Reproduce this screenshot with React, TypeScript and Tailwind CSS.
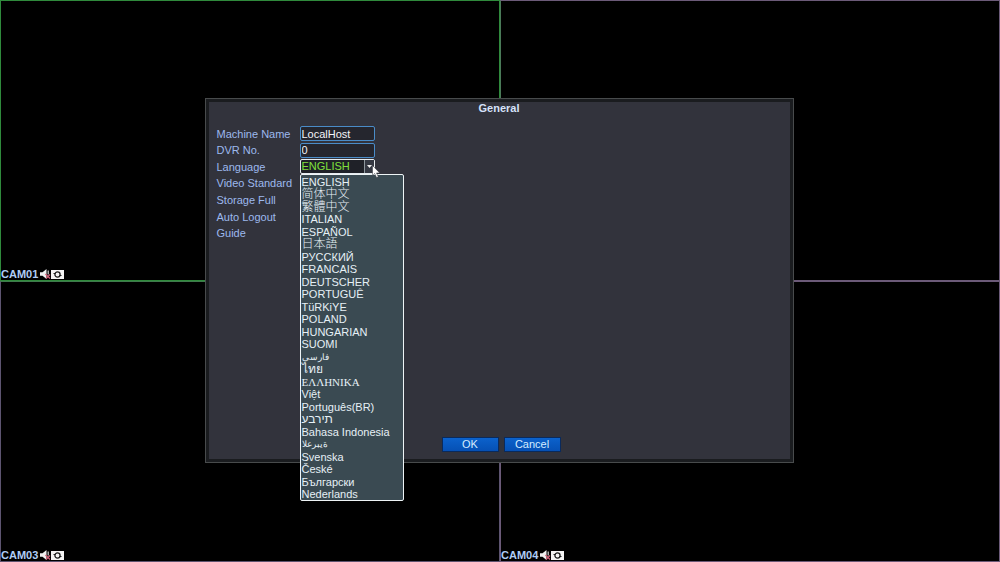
import { useState } from 'react';
import { clsx } from 'clsx';

const cameras = [
  { name: 'CAM01', border: 'border-[#2f8a3c]' },
  { name: 'CAM02', border: 'border-[#6b5a78] border-l-[#4a7a58]' },
  { name: 'CAM03', border: 'border-[#5d5470] border-t-[#3f7a4c]' },
  { name: 'CAM04', border: 'border-[#6b5a78]' },
];

const languages = [
  { label: 'ENGLISH' },
  { label: '简体中文', style: 'text-[12px] font-light' },
  { label: '繁體中文', style: 'text-[12px] font-light' },
  { label: 'ITALIAN' },
  { label: 'ESPAÑOL' },
  { label: '日本語', style: 'text-[12px] font-light' },
  { label: 'РУССКИЙ' },
  { label: 'FRANCAIS' },
  { label: 'DEUTSCHER' },
  { label: 'PORTUGUÊ' },
  { label: 'TüRKiYE' },
  { label: 'POLAND' },
  { label: 'HUNGARIAN' },
  { label: 'SUOMI' },
  { label: 'فارسی', style: 'text-[9px]' },
  { label: 'ไทย', style: 'text-[12px]' },
  { label: 'ΕΛΛΗΝΙΚΑ', style: "text-[11px] font-['Liberation_Serif',serif]" },
  { label: 'Việt' },
  { label: 'Português(BR)' },
  { label: 'עברית', style: 'text-[12px] [direction:ltr] [unicode-bidi:bidi-override]' },
  { label: 'Bahasa Indonesia' },
  { label: 'العربية', style: 'text-[9px] [direction:ltr] [unicode-bidi:bidi-override]' },
  { label: 'Svenska' },
  { label: 'České' },
  { label: 'Български' },
  { label: 'Nederlands' },
];

const otherSettings = ['Video Standard', 'Storage Full', 'Auto Logout', 'Guide'];

const fieldStyle =
  'h-[15px] w-[75px] rounded-[2px] border border-[#4a8cc8] bg-[#25262e] px-px text-[11px] leading-none text-[#f2f4f8] outline-none';

function MutedIcon() {
  return (
    <svg width="11" height="10" viewBox="0 0 11 10" aria-hidden="true">
      <path d="M0 3.2h2.5L6.5 0v10L2.5 6.8H0z" fill="#f0f0f0" />
      <path d="M8.2 1.5v4" stroke="#d8d8d8" strokeWidth="1.2" />
      <path d="M5.5 5l4.5 4.5M10 5.5L6 9.5" stroke="#d06078" strokeWidth="1.3" />
    </svg>
  );
}

function RecordIcon() {
  return (
    <svg width="13" height="9" viewBox="0 0 13 9" aria-hidden="true">
      <rect width="13" height="9" fill="#f4f4f4" />
      <circle cx="6.5" cy="4.5" r="2.6" fill="none" stroke="#1c1c1c" strokeWidth="1.3" />
      <path d="M2.5 3.5h2M8.5 5.5h2" stroke="#1c1c1c" strokeWidth="1" />
    </svg>
  );
}

function CameraGrid() {
  return (
    <div className="grid min-h-screen grid-cols-2 grid-rows-2">
      {cameras.map((camera) => (
        <section
          key={camera.name}
          aria-label={camera.name}
          className={clsx('flex items-end border', camera.border)}
        >
          <div className="flex h-3 items-center text-[11px] leading-3 font-bold text-[#b0cdf6]">
            <span>{camera.name}</span>
            <span className="ml-0.5 flex items-center">
              <MutedIcon />
              <RecordIcon />
            </span>
          </div>
        </section>
      ))}
    </div>
  );
}

function LanguageSelect() {
  const [language, setLanguage] = useState('ENGLISH');

  return (
    <div className="relative w-[75px]">
      <select
        id="language"
        value={language}
        onChange={(e) => setLanguage(e.target.value)}
        className="block h-[15px] w-full appearance-none rounded-[2px] border border-[#e6ecf0] bg-[#1f2128] px-px text-[11px] leading-none text-[#80e03c] outline-none"
      >
        {languages.map((item) => (
          <option key={item.label}>{item.label}</option>
        ))}
      </select>
      <span className="pointer-events-none absolute inset-y-px right-px flex w-[10px] items-center justify-center border-l border-[#8d969c] bg-[#343842]">
        <svg width="5" height="3" viewBox="0 0 5 3" aria-hidden="true">
          <path d="M0 0h5L2.5 3z" fill="#f0f0f0" />
        </svg>
      </span>

      {/* Open list */}
      <ul className="absolute top-full left-0 z-10 flex h-[327px] w-[104px] flex-col rounded-[2px] border border-[#eef4f6] bg-[#3a4a52]">
        {languages.map((item) => (
          <li key={item.label} className="flex min-h-0 flex-1 items-center">
            <button
              type="button"
              onClick={() => setLanguage(item.label)}
              className={clsx(
                'h-3 w-full px-px text-left leading-3 whitespace-nowrap text-[#e6f0f6]',
                item.style ?? 'text-[11px]'
              )}
            >
              {item.label}
            </button>
          </li>
        ))}
      </ul>

      {/* Mouse pointer */}
      <svg
        className="pointer-events-none absolute top-[6px] left-[72px] z-20"
        width="9"
        height="14"
        viewBox="0 0 9 14"
        aria-hidden="true"
      >
        <path d="M0.5 0.5v10l2.2-2 1.8 4 1.8-.8-1.8-3.8h3.2z" fill="#fff" stroke="#30343c" strokeWidth="0.5" />
      </svg>
    </div>
  );
}

function GeneralDialog() {
  return (
    <form
      aria-labelledby="dialog-title"
      onSubmit={(e) => e.preventDefault()}
      className="flex h-[365px] w-[589px] flex-col border border-[#484b4c] bg-[#1a1c1f] p-[3px]"
    >
      <div className="flex flex-1 flex-col bg-[#32333c] px-2">
        <h1 id="dialog-title" className="h-3 text-center text-[11px] leading-3 font-bold text-[#d6e2fa]">
          General
        </h1>
        <div className="mt-3 grid h-[116px] auto-rows-fr grid-cols-[83px_1fr] items-center text-[11px] leading-3 text-[#9db9ee]">
          <label htmlFor="machine-name">Machine Name</label>
          <input id="machine-name" type="text" defaultValue="LocalHost" className={fieldStyle} />
          <label htmlFor="dvr-no">DVR No.</label>
          <input id="dvr-no" type="text" defaultValue="0" className={fieldStyle} />
          <label htmlFor="language">Language</label>
          <LanguageSelect />
          {otherSettings.map((setting) => (
            <span key={setting} className="col-start-1 whitespace-nowrap">
              {setting}
            </span>
          ))}
        </div>
        <div className="mt-auto mb-[7px] flex justify-center gap-[5px] pl-1">
          {['OK', 'Cancel'].map((action) => (
            <button
              key={action}
              type="button"
              className="h-[15px] w-[57px] border border-[#0a2a5c] bg-linear-to-b from-[#0c62cc] to-[#0650b4] text-[11px] leading-3 text-[#d4ecff]"
            >
              {action}
            </button>
          ))}
        </div>
      </div>
    </form>
  );
}

export default function App() {
  return (
    <main className="relative min-h-screen bg-black font-['Liberation_Sans','Noto_Sans_CJK_SC',sans-serif]">
      <CameraGrid />
      <div className="absolute inset-0 flex items-center justify-center pr-0.5 pb-0.5">
        <GeneralDialog />
      </div>
    </main>
  );
}
